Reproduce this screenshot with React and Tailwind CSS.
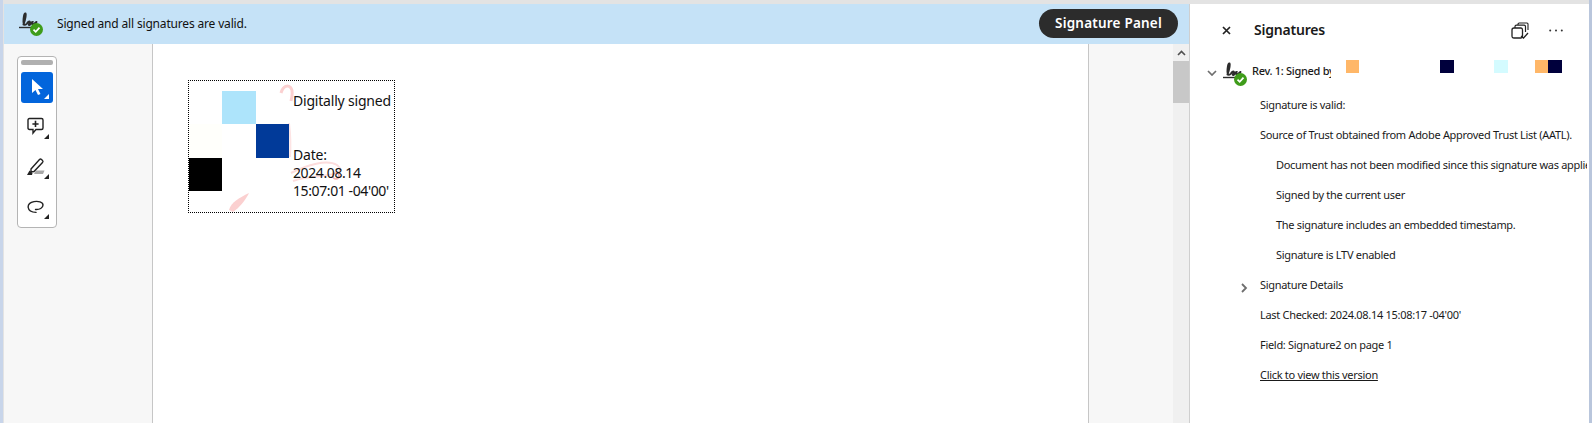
const Tri = ({ white, className }) => (
  <svg width="5" height="5" viewBox="0 0 5 5" className={`absolute right-[4px] ${className}`}>
    <path d="M5 0V5H0Z" fill={white ? "#ffffff" : "#222222"} />
  </svg>
);

const SigIcon = () => (
  <svg width="26" height="26" viewBox="0 0 26 26" fill="none" className="shrink-0">
    <path d="M1 16.5H18" stroke="#2c2c2c" strokeWidth="1.4" />
    <path d="M5.5 13.5C7 9 8.5 4.5 7.5 2.5C6 2 5.5 8 5.5 11C5.5 14.5 7.5 14.5 9 12.5C10 11 12 9.5 12 11.5C11 13.5 10 14 11.5 14C13 13.5 13 11 14.5 11C14 13 14.5 14 16 13C17 12.5 17.5 11.5 18.5 11" stroke="#2c2c2c" strokeWidth="2" strokeLinecap="round" />
    <circle cx="18.5" cy="18.5" r="6.5" fill="#3f9c1a" />
    <path d="M15.5 18.7L17.7 20.8L21.5 16.6" stroke="#ffffff" strokeWidth="1.7" />
  </svg>
);

const ToolBtn = ({ children }) => (
  <div className="relative w-8 h-10 flex items-center justify-center">
    {children}
    <Tri className="bottom-[8px]" />
  </div>
);

const Row = ({ indent, children }) => (
  <div className={`w-[397px] h-[30px] flex items-center whitespace-nowrap overflow-hidden ${indent ? "pl-[86px]" : "pl-[70px]"}`}>
    {children}
  </div>
);

export default function App() {
  return (
    <div className="w-[1592px] h-[423px] overflow-hidden flex bg-white text-[#1a1a1a] font-['Noto_Sans',sans-serif]">
      <div className="w-[4px] bg-[#c8d5ea] border-r border-[#e3e3e3] shrink-0" />
      <div className="flex-1 min-w-0 flex flex-col">
        <div className="h-[4px] bg-[#e3e3e3] shrink-0" />
        <div className="flex-1 min-h-0 flex">
          <div className="w-[1185px] shrink-0 flex flex-col">
            <div className="h-[40px] shrink-0 bg-[#c5e2f7] flex items-center pl-[14px] pr-[11px]">
              <SigIcon />
              <span className="ml-[13px] text-[12px] tracking-[-0.17px] text-[#111111]">Signed and all signatures are valid.</span>
              <button className="ml-auto mb-[1px] h-[29px] w-[139px] rounded-full bg-[#2c2c2c] text-white text-[13.5px] font-semibold tracking-[0.2px]">Signature Panel</button>
            </div>
            <div className="flex-1 min-h-0 flex">
              <div className="w-[149px] shrink-0 bg-[#f7f7f7] border-r border-[#c6c6c6] pt-[12px] pl-[13px]">
                <div className="w-[40px] h-[172px] bg-white border border-[#b4b4b4] rounded-[4px] flex flex-col items-center pt-[3px]">
                  <div className="w-8 h-[5px] rounded-[2px] bg-[#b0b0b0]" />
                  <div className="relative mt-[7px] w-8 h-8 rounded-[3px] bg-[#0265dc] flex items-center justify-center">
                    <svg width="14" height="18" viewBox="0 0 14 18">
                      <path d="M2 1V15L5.5 12L8 17L10.5 16L8 11H13Z" fill="#ffffff" />
                    </svg>
                    <Tri white className="bottom-[4px]" />
                  </div>
                  <div className="mt-[4px]">
                    <ToolBtn>
                      <svg width="18" height="18" viewBox="0 0 18 18" fill="none" className="-translate-x-[1px] -translate-y-[1px]">
                        <path d="M2.5 1.5H14.5Q16 1.5 16 3V11Q16 12.5 14.5 12.5H9L6 16V12.5H2.5Q1 12.5 1 11V3Q1 1.5 2.5 1.5Z" stroke="#222222" strokeWidth="1.4" />
                        <path d="M8.5 3.8V10M5.4 7H11.6" stroke="#222222" strokeWidth="1.6" />
                      </svg>
                    </ToolBtn>
                    <ToolBtn>
                      <svg width="20" height="20" viewBox="0 0 20 20" fill="none" className="-translate-x-[1px]">
                        <path d="M8 17H17L18.5 13.5H10Z" fill="#a8a8a8" />
                        <path d="M5 12L13.5 2.5Q14.5 1.5 15.5 2.5L16.5 3.5Q17.5 4.5 16.5 5.5L8 14.5L5 15Z" stroke="#222222" strokeWidth="1.4" fill="#ffffff" />
                        <path d="M1 18L3.5 13.5L6.5 16L6 18Z" fill="#222222" />
                      </svg>
                    </ToolBtn>
                    <ToolBtn>
                      <svg width="18" height="14" viewBox="0 0 18 14" fill="none" className="-translate-x-[1px]">
                        <path d="M8.5 9.5C12.5 9.8 16 8 16 5C16 2 11 0.8 7 1.6C3 2.4 0.8 4.5 1.2 7.5C1.6 10.5 5 12.2 9 12.4" stroke="#222222" strokeWidth="1.4" strokeLinecap="round" />
                      </svg>
                    </ToolBtn>
                  </div>
                </div>
              </div>
              <div className="w-[935px] shrink-0 bg-white pt-[36px] pl-[35px]">
                <div className="relative w-[207px] h-[133px] border border-dotted border-black overflow-hidden">
                  <svg width="205" height="131" viewBox="0 0 205 131" fill="none" className="absolute left-0 top-0">
                    <path d="M92 12C94 5 99 3 102 7C104 10 103 16 102 20" stroke="#fbd0d0" strokeWidth="3" />
                    <path d="M100 42C101 50 102 62 101 76" stroke="#fde4e4" strokeWidth="2" />
                    <path d="M102 92C118 84 138 78 148 84C155 90 150 93 132 95C120 96 112 97 104 100" stroke="#fcdcdc" strokeWidth="2" />
                    <circle cx="147" cy="95" r="3" stroke="#f4b0b0" strokeWidth="1.5" />
                    <path d="M40 129C42 121 50 117 60 112C56 120 50 127 44 131" fill="#fbd0d0" />
                  </svg>
                  <div className="relative flex pt-[10px]">
                    <div className="grid grid-cols-[33px_34px_33px] grid-rows-[33px_34px_33px] h-[100px] shrink-0">
                      <div />
                      <div className="bg-[#ade4fb]" />
                      <div />
                      <div className="bg-[#fffffb]" />
                      <div />
                      <div className="bg-[#013a99]" />
                      <div className="bg-black" />
                      <div />
                      <div />
                    </div>
                    <div className="ml-[4px] mt-[1px] text-[14px] leading-[18px] whitespace-nowrap text-[#111111] tracking-[-0.2px]">
                      <div>Digitally signed</div>
                      <div className="h-[36px]" />
                      <div>Date:</div>
                      <div className="tracking-[-0.4px]">2024.08.14</div>
                      <div className="tracking-[-0.4px]">15:07:01 -04'00'</div>
                    </div>
                  </div>
                </div>
              </div>
              <div className="w-[85px] shrink-0 bg-[#f7f7f7] border-l border-[#c6c6c6]" />
              <div className="w-[16px] shrink-0 bg-[#f0f0f0] flex flex-col items-center">
                <svg width="9" height="6" viewBox="0 0 9 6" fill="none" className="mt-[6px]">
                  <path d="M1 5L4.5 1.5L8 5" stroke="#505050" strokeWidth="1.6" />
                </svg>
                <div className="mt-[5px] w-full h-[42px] bg-[#c8c8c8]" />
              </div>
            </div>
          </div>
          <div className="flex-1 min-w-0 border-l border-[#cfcfcf] text-[11px] tracking-[-0.3px] overflow-hidden">
            <div className="h-[50px] flex items-center pl-[32px] pr-[26px] pt-[2px]">
              <svg width="9" height="9" viewBox="0 0 9 9" fill="none" className="shrink-0">
                <path d="M1 1L8 8M8 1L1 8" stroke="#222222" strokeWidth="1.7" />
              </svg>
              <span className="ml-[23px] text-[14px] font-semibold tracking-[-0.2px] -translate-y-[1px]">Signatures</span>
              <svg width="18" height="17" viewBox="0 0 18 17" fill="none" className="ml-auto shrink-0">
                <path d="M1 8Q1 6 3 6H10Q11.5 6 11.5 8V14Q11.5 16 10 16H3Q1 16 1 14Z" stroke="#222222" strokeWidth="1.3" />
                <path d="M4 6V4.5Q4 3.2 5.5 3.2H13Q14.5 3.2 14.5 4.5V10" stroke="#222222" strokeWidth="1.2" />
                <path d="M7 3V2Q7 1 8.2 1H16Q17 1 17 2V8" stroke="#222222" strokeWidth="1.1" />
                <path d="M10 14L12.5 16L17 11" stroke="#222222" strokeWidth="1.3" />
              </svg>
              <svg width="14" height="3" viewBox="0 0 14 3" className="ml-[20px] shrink-0">
                <circle cx="1.2" cy="1.5" r="1" fill="#333333" />
                <circle cx="7" cy="1.5" r="1" fill="#333333" />
                <circle cx="12.8" cy="1.5" r="1" fill="#333333" />
              </svg>
            </div>
            <div className="h-[34px] flex items-start pl-[17px] mb-[2px]">
              <svg width="10" height="6" viewBox="0 0 10 6" fill="none" className="mt-[16px] shrink-0">
                <path d="M1 1L5 5L9 1" stroke="#6e6e6e" strokeWidth="1.7" />
              </svg>
              <div className="ml-[5px] mt-[7px] shrink-0"><SigIcon /></div>
              <div className="ml-[4px] w-[79px] h-full shrink-0 overflow-hidden whitespace-nowrap leading-[34px] font-medium">Rev. 1: Signed by</div>
              <div className="ml-[15px] mt-[6px] w-[13px] h-[13px] shrink-0 bg-[#ffb768]" />
              <div className="ml-[81px] mt-[6px] w-[14px] h-[13px] shrink-0 bg-[#00003c]" />
              <div className="ml-[40px] mt-[6px] w-[14px] h-[13px] shrink-0 bg-[#d4fbff]" />
              <div className="ml-[27px] mt-[6px] w-[13px] h-[13px] shrink-0 bg-[#ffb768]" />
              <div className="mt-[6px] w-[14px] h-[13px] shrink-0 bg-[#00003c]" />
            </div>
            <Row>Signature is valid:</Row>
            <Row>Source of Trust obtained from Adobe Approved Trust List (AATL).</Row>
            <Row indent>Document has not been modified since this signature was applied</Row>
            <Row indent>Signed by the current user</Row>
            <Row indent>The signature includes an embedded timestamp.</Row>
            <Row indent>Signature is LTV enabled</Row>
            <div className="h-[30px] flex items-center pl-[51px]">
              <svg width="7" height="10" viewBox="0 0 7 10" fill="none" className="shrink-0 translate-y-[3px]">
                <path d="M1 1L5 5L1 9" stroke="#6e6e6e" strokeWidth="1.8" />
              </svg>
              <span className="ml-[12px]">Signature Details</span>
            </div>
            <Row>Last Checked: 2024.08.14 15:08:17 -04'00'</Row>
            <Row>Field: Signature2 on page 1</Row>
            <Row><span className="underline">Click to view this version</span></Row>
          </div>
        </div>
      </div>
      <div className="w-[3px] bg-[#b9c6dc] shrink-0" />
    </div>
  );
}
